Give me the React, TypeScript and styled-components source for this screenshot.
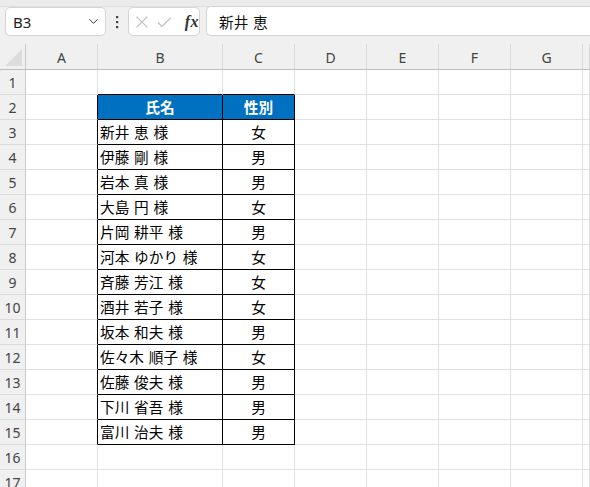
import React from "react";
import styled, { createGlobalStyle } from "styled-components";
import { ChevronDown } from "lucide-react";

const GlobalStyle = createGlobalStyle`
  html, body { margin: 0; padding: 0; background: #ffffff; overflow: hidden; }
  body { font-family: "Noto Sans", "Noto Sans CJK JP", sans-serif; }
  * { box-sizing: border-box; }
`;

const Page = styled.div`
  width: 590px;
  height: 487px;
  overflow: hidden;
  background: #ffffff;
  display: flex;
  flex-direction: column;
`;

const TopStrip = styled.div`
  height: 7px;
  background: #ebebeb;
  border-bottom: 1px solid #dedede;
  flex: none;
`;

const FormulaBar = styled.div`
  height: 37px;
  background: #f0f0f0;
  display: flex;
  align-items: flex-start;
  padding: 0 0 0 5px;
  flex: none;
`;

const NameBox = styled.div`
  width: 101px;
  height: 29px;
  background: #ffffff;
  border: 1px solid #d4d4d4;
  border-radius: 5px;
  display: flex;
  align-items: center;
  justify-content: space-between;
  padding: 0 4px 0 7px;
  font-family: "Noto Sans", sans-serif;
  font-size: 15px;
  color: #222;
`;

const Dots = styled.div`
  width: 22px;
  height: 29px;
  display: flex;
  align-items: center;
  justify-content: center;
`;

const FxBox = styled.div`
  width: 72px;
  height: 29px;
  background: #ffffff;
  border: 1px solid #d4d4d4;
  border-radius: 5px;
  display: flex;
  align-items: center;
  padding: 0 0 0 6px;
  gap: 8px;
`;

const FxLabel = styled.span`
  font-family: "Liberation Serif", "DejaVu Serif", serif;
  font-style: italic;
  font-weight: bold;
  font-size: 16px;
  color: #333;
  margin-left: 5px;
  letter-spacing: 0.5px;
`;

const FormulaInput = styled.div`
  flex: 1;
  margin-left: 6px;
  height: 30px;
  margin-top: -1px;
  background: #ffffff;
  border: 1px solid #d4d4d4;
  border-right: none;
  border-radius: 5px 0 0 5px;
  display: flex;
  align-items: center;
  padding-left: 12px;
  font-family: "Noto Sans CJK JP", sans-serif;
  font-size: 14.67px;
  word-spacing: 1.5px;
  color: #111;
`;

const Sheet = styled.div`
  display: flex;
  flex-direction: column;
  flex: 1;
`;

const Row = styled.div<{ $h: number }>`
  display: flex;
  height: ${(p) => p.$h}px;
  flex: none;
`;

const Corner = styled.div`
  width: 26px;
  flex: none;
  background: #f0f0f0;
  border-right: 1px solid #c8c8c8;
  border-bottom: 1px solid #bdbdbd;
  display: flex;
  align-items: flex-end;
  justify-content: flex-end;
  padding: 0 3px 3px 0;
`;

const ColHeader = styled.div<{ $w?: number }>`
  ${(p) => (p.$w ? `width: ${p.$w}px; flex: none;` : "flex: 1;")}
  background: #f0f0f0;
  border-right: 1px solid #dadada;
  border-bottom: 1px solid #bdbdbd;
  display: flex;
  align-items: center;
  justify-content: center;
  font-family: "Noto Sans", sans-serif;
  font-size: 14px;
  color: #444;
  padding-top: 1px;
`;

const RowHeader = styled.div`
  width: 26px;
  flex: none;
  background: #f0f0f0;
  border-right: 1px solid #c8c8c8;
  border-bottom: 1px solid #dadada;
  display: flex;
  align-items: center;
  justify-content: center;
  font-family: "Noto Sans", sans-serif;
  font-size: 14px;
  color: #444;
  padding-top: 1px;
`;

const Cell = styled.div<{
  $w?: number;
  $right?: string;
  $bottom?: string;
  $bg?: string;
  $align?: "left" | "center";
  $head?: boolean;
}>`
  ${(p) => (p.$w ? `width: ${p.$w}px; flex: none;` : "flex: 1;")}
  background: ${(p) => p.$bg || "#ffffff"};
  border-right: 1px solid ${(p) => p.$right || "#e1e1e1"};
  border-bottom: 1px solid ${(p) => p.$bottom || "#e1e1e1"};
  display: flex;
  align-items: center;
  justify-content: ${(p) => (p.$align === "center" ? "center" : "flex-start")};
  padding-left: ${(p) => (p.$align === "center" ? 0 : 2)}px;
  font-family: "Noto Sans CJK JP", sans-serif;
  font-size: 14.67px;
  word-spacing: 1.5px;
  font-weight: ${(p) => (p.$head ? 700 : 400)};
  color: ${(p) => (p.$head ? "#ffffff" : "#000000")};
  white-space: pre;
  overflow: hidden;
  padding-bottom: 1px;
`;

type Col = { key: string; w?: number };
const COLS: Col[] = [
  { key: "A", w: 72 },
  { key: "B", w: 125 },
  { key: "C", w: 72 },
  { key: "D", w: 72 },
  { key: "E", w: 72 },
  { key: "F", w: 72 },
  { key: "G", w: 72 },
  { key: "H" },
];

const DATA: [string, string][] = [
  ["氏名", "性別"],
  ["新井 恵 様", "女"],
  ["伊藤 剛 様", "男"],
  ["岩本 真 様", "男"],
  ["大島 円 様", "女"],
  ["片岡 耕平 様", "男"],
  ["河本 ゆかり 様", "女"],
  ["斉藤 芳江 様", "女"],
  ["酒井 若子 様", "女"],
  ["坂本 和夫 様", "男"],
  ["佐々木 順子 様", "女"],
  ["佐藤 俊夫 様", "男"],
  ["下川 省吾 様", "男"],
  ["富川 治夫 様", "男"],
];

const BLACK = "#000000";
const BLUE = "#0070c0";

function renderCells(rowNum: number) {
  const inTable = rowNum >= 2 && rowNum <= 15;
  const entry = inTable ? DATA[rowNum - 2] : null;
  return COLS.map((c) => {
    const key = c.key;
    if (key === "A") {
      return <Cell key={key} $w={c.w} $right={inTable ? BLACK : undefined} />;
    }
    if (key === "B" || key === "C") {
      const text = entry ? (key === "B" ? entry[0] : entry[1]) : "";
      const head = rowNum === 2;
      return (
        <Cell
          key={key}
          $w={c.w}
          $right={inTable ? BLACK : undefined}
          $bottom={inTable || rowNum === 1 ? BLACK : undefined}
          $bg={head ? BLUE : undefined}
          $head={head}
          $align={head || key === "C" ? "center" : "left"}
        >
          {text}
        </Cell>
      );
    }
    return <Cell key={key} $w={c.w} />;
  });
}

export default function App() {
  const rows = Array.from({ length: 17 }, (_, i) => i + 1);
  return (
    <Page>
      <GlobalStyle />
      <TopStrip />
      <FormulaBar>
        <NameBox>
          <span>B3</span>
          <ChevronDown size={15} strokeWidth={1.6} color="#333" />
        </NameBox>
        <Dots>
          <svg width="4" height="14" viewBox="0 0 4 14">
            <rect x="1" y="1" width="2.2" height="2.2" fill="#444" />
            <rect x="1" y="6" width="2.2" height="2.2" fill="#444" />
            <rect x="1" y="11" width="2.2" height="2.2" fill="#444" />
          </svg>
        </Dots>
        <FxBox>
          <svg width="14" height="14" viewBox="0 0 14 14">
            <path d="M1.5 1.5 L12.5 12.5 M12.5 1.5 L1.5 12.5" stroke="#bdbdbd" strokeWidth="1.2" fill="none" />
          </svg>
          <svg width="15" height="12" viewBox="0 0 15 12">
            <path d="M1 6.5 L5 10.5 L14 1.5" stroke="#bdbdbd" strokeWidth="1.2" fill="none" />
          </svg>
          <FxLabel>fx</FxLabel>
        </FxBox>
        <FormulaInput>新井 恵</FormulaInput>
      </FormulaBar>
      <Sheet>
        <Row $h={26}>
          <Corner>
            <svg width="17" height="17" viewBox="0 0 17 17">
              <polygon points="17,0 17,17 0,17" fill="#dcdcdc" />
            </svg>
          </Corner>
          {COLS.map((c) => (
            <ColHeader key={c.key} $w={c.w}>
              {c.key === "H" ? "" : c.key}
            </ColHeader>
          ))}
        </Row>
        {rows.map((r) => (
          <Row key={r} $h={25}>
            <RowHeader>{r}</RowHeader>
            {renderCells(r)}
          </Row>
        ))}
      </Sheet>
    </Page>
  );
}
